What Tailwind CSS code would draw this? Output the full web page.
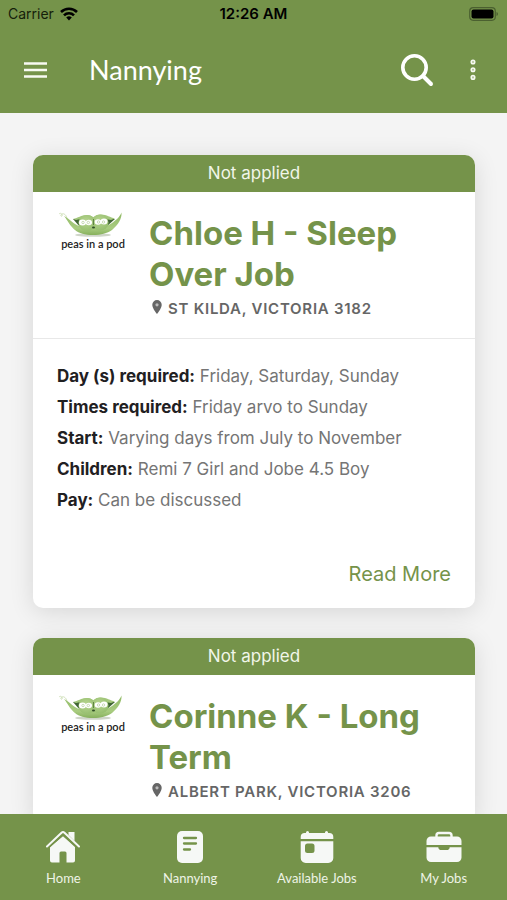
<!DOCTYPE html>
<html lang="en">
<head>
<meta charset="utf-8">
<meta name="viewport" content="width=device-width, initial-scale=1">
<title>Nannying</title>
<script src="https://cdn.jsdelivr.net/npm/@tailwindcss/browser@4"></script>
</head>
<body class="flex h-dvh flex-col overflow-hidden bg-[#f4f4f4] font-['Inter','Liberation_Sans',sans-serif]">
<svg class="absolute size-0" aria-hidden="true">
  <defs>
    <linearGradient id="pod" x1="0" y1="0" x2="0" y2="1">
      <stop offset="0" stop-color="#8fb964"/><stop offset=".7" stop-color="#a9cc80"/><stop offset="1" stop-color="#86b05c"/>
    </linearGradient>
    <radialGradient id="pea" cx=".45" cy=".4" r=".65">
      <stop offset="0" stop-color="#b9d692"/><stop offset="1" stop-color="#94bd6c"/>
    </radialGradient>
    <symbol id="peas" viewBox="0 0 68 28">
      <ellipse cx="36" cy="25" rx="18" ry="1.8" fill="#c3cabc" opacity=".8"/>
      <path d="M2 4c2-2 4 1 3 2s-2-1 0-2 4 1 5 4" fill="none" stroke="#d3e3bd" stroke-width="1"/>
      <path d="M16 9h42l-9 8H23z" fill="#3f6433"/>
      <path d="M7 6c5 3 7 5 11 8 5 3 9 4 18 4s15-2 19-5c4-3 7-5 9.500-10.500C65 9 61 15 55 20c-5 3.500-11 5-19 5s-14-1.500-18-5C13 16 11 11 7 6z" fill="url(#pod)"/>
      <path d="M16 9c5-1 8-4 14-4 3 0 5 1 6.500 2.500C38 5.500 41 4.500 44 4.500c6 0 9 3 14 4l-4 1.500-6-1H24l-5 1z" fill="#a3c77c"/>
      <ellipse cx="30" cy="13" rx="8.500" ry="8" fill="url(#pea)"/>
      <ellipse cx="43" cy="12.500" rx="8.500" ry="8" fill="url(#pea)"/>
      <g fill="#fff">
        <ellipse cx="25.500" cy="12.500" rx="3.600" ry="3"/><ellipse cx="31.800" cy="12.500" rx="3.200" ry="2.800"/>
        <ellipse cx="41" cy="12" rx="3.300" ry="2.800"/><ellipse cx="47" cy="11.500" rx="3.500" ry="3"/>
      </g>
      <g fill="none" stroke="#b5cd9c" stroke-width=".7"><circle cx="26" cy="12.500" r="1.200"/><circle cx="31.300" cy="12.500" r="1.200"/><circle cx="41.500" cy="12" r="1.200"/><circle cx="46.500" cy="12" r="1.200"/></g>
      <path d="M36.500 9v6" stroke="#5f8545" stroke-width="1"/>
      <ellipse cx="36.500" cy="17.500" rx="1.500" ry="1" fill="#2f4d26"/>
    </symbol>
    <symbol id="pin" viewBox="0 0 10 14">
      <path fill="#666" d="M5 0a4.700 4.700 0 0 0-4.700 4.700C.3 8 3.500 12 5 14c1.500-2 4.700-6 4.700-9.300A4.700 4.700 0 0 0 5 0z"/><circle cx="5" cy="4.800" r="1.600" fill="#bbb"/>
    </symbol>
  </defs>
</svg>

<header class="shrink-0 bg-[#75934a]">
  <div class="grid h-7 grid-cols-3 items-center px-2 text-sm text-black">
    <div class="flex items-center gap-1.5 text-[#15200a]">
      <span>Carrier</span>
      <svg class="h-[14px] w-[18px]" viewBox="0 0 18 14" fill="none" stroke="#000" stroke-width="2.600" aria-label="Wi-Fi">
        <path d="M1 5a11.500 11.500 0 0 1 16 0M4 8.300a7 7 0 0 1 10 0"/>
        <path d="M9 13.500 6.200 10.600a4 4 0 0 1 5.600 0z" fill="#000" stroke="none"/>
      </svg>
    </div>
    <span class="text-center text-[15px] font-semibold">12:26 AM</span>
    <svg class="h-[14px] w-[30px] justify-self-end" viewBox="0 0 30 14" aria-label="Battery full">
      <rect x=".7" y=".7" width="25.600" height="12.600" rx="3.500" fill="none" stroke="#4b6030" stroke-width="1.200"/>
      <rect x="2.500" y="2.500" width="22" height="9" rx="2" fill="#000"/>
      <path d="M27.500 5c2 .7 2 3.300 0 4z" fill="#4b6030"/>
    </svg>
  </div>
  <div class="flex h-[85px] items-center pr-[31px] pb-0.5 pl-6 text-white">
    <button type="button" aria-label="Menu" class="mr-[42px]">
      <svg class="h-4 w-[23px]" viewBox="0 0 23 16" stroke="#f7faf2" stroke-width="2.300"><path d="M0 1.500h23M0 8h23M0 14.500h23"/></svg>
    </button>
    <h1 class="grow font-['Lato',sans-serif] text-[27px] leading-8">Nannying</h1>
    <button type="button" aria-label="Search" class="mr-9">
      <svg class="size-[34px]" viewBox="0 0 34 34" fill="none" stroke="#fff" stroke-linecap="round"><circle cx="14.500" cy="14.500" r="11.700" stroke-width="3.600"/><path d="m23 23 8 8" stroke-width="4"/></svg>
    </button>
    <button type="button" aria-label="More options">
      <svg class="h-[22px] w-1.5" viewBox="0 0 6 22" fill="#b4c59b" stroke="#f7faf2" stroke-width="1.500"><circle cx="3" cy="3" r="1.800"/><circle cx="3" cy="10.700" r="1.800"/><circle cx="3" cy="18.400" r="1.800"/></svg>
    </button>
  </div>
</header>

<main class="flex min-h-0 grow flex-col gap-[30px] overflow-hidden pt-[42px] pr-8 pl-[33px]">
  <article class="shrink-0 overflow-hidden rounded-[10px] bg-white shadow-[0_4px_24px_rgba(0,0,0,0.12)]">
    <p class="bg-[#75934a] text-center text-[17px] leading-[37px] text-[#f1f6e9]">Not applied</p>
    <div class="flex gap-6 border-b border-[#e8e8e8] px-6 pt-[18px] pb-[15px]">
      <div class="flex w-[68px] shrink-0 flex-col items-center">
        <svg class="h-7 w-[68px]" role="img" aria-label="Pea pod"><use href="#peas"/></svg>
        <span class="pl-1 font-['Lato',sans-serif] text-[11px] leading-[12px] font-semibold whitespace-nowrap text-[#222]">peas in a pod</span>
      </div>
      <div>
        <h2 class="pt-[3px] text-[33px] leading-[41px] font-bold text-[#75934a]">Chloe H - Sleep Over Job</h2>
        <p class="flex items-center gap-1.5 pl-[3px] text-[15px] leading-7 font-semibold tracking-wider text-[#666]"><svg class="mb-1 h-[14px] w-2.5"><use href="#pin"/></svg>ST KILDA, VICTORIA 3182</p>
      </div>
    </div>
    <dl class="px-6 pt-[22px] text-[17px] leading-[31px] text-[#757575]">
      <div><dt class="inline font-bold text-[#1f2022]">Day (s) required:</dt> <dd class="inline">Friday, Saturday, Sunday</dd></div>
      <div><dt class="inline font-bold text-[#1f2022]">Times required:</dt> <dd class="inline">Friday arvo to Sunday</dd></div>
      <div><dt class="inline font-bold text-[#1f2022]">Start:</dt> <dd class="inline">Varying days from July to November</dd></div>
      <div><dt class="inline font-bold text-[#1f2022]">Children:</dt> <dd class="inline">Remi 7 Girl and Jobe 4.5 Boy</dd></div>
      <div><dt class="inline font-bold text-[#1f2022]">Pay:</dt> <dd class="inline">Can be discussed</dd></div>
    </dl>
    <div class="flex justify-end px-6 pt-[43px] pb-[19px]">
      <a href="#" class="text-[20px] leading-[30px] text-[#75934a]">Read More</a>
    </div>
  </article>

  <article class="shrink-0 overflow-hidden rounded-[10px] bg-white shadow-[0_4px_24px_rgba(0,0,0,0.12)]">
    <p class="bg-[#75934a] text-center text-[17px] leading-[37px] text-[#f1f6e9]">Not applied</p>
    <div class="flex gap-6 border-b border-[#e8e8e8] px-6 pt-[18px] pb-[15px]">
      <div class="flex w-[68px] shrink-0 flex-col items-center">
        <svg class="h-7 w-[68px]" role="img" aria-label="Pea pod"><use href="#peas"/></svg>
        <span class="pl-1 font-['Lato',sans-serif] text-[11px] leading-[12px] font-semibold whitespace-nowrap text-[#222]">peas in a pod</span>
      </div>
      <div>
        <h2 class="pt-[3px] text-[33px] leading-[41px] font-bold text-[#75934a]">Corinne K - Long Term</h2>
        <p class="flex items-center gap-1.5 pl-[3px] text-[15px] leading-7 font-semibold tracking-wider text-[#666]"><svg class="mb-1 h-[14px] w-2.5"><use href="#pin"/></svg>ALBERT PARK, VICTORIA 3206</p>
      </div>
    </div>
  </article>
</main>

<nav class="grid h-[86px] shrink-0 grid-cols-4 bg-[#75934a] pt-4 font-['Lato',sans-serif] text-[13px] leading-4 text-[#eef3e6]">
  <a href="#" class="flex flex-col items-center gap-1.5">
    <svg class="size-[34px]" viewBox="0 0 34 34" fill="#f6f8f6">
      <path d="M17 6.300 29 17v13.500a2 2 0 0 1-2 2h-6.500V23a1.500 1.500 0 0 0-1.500-1.500h-4a1.500 1.500 0 0 0-1.500 1.500v9.500H6a2 2 0 0 1-2-2V17z"/>
      <path d="M1 16.500 15.500 2.800a2 2 0 0 1 3 0L33 16.500" fill="none" stroke="#f6f8f6" stroke-width="2" stroke-linecap="round"/>
      <path d="M22.500 2h6v9l-6-6z"/>
      <path d="m3.500 17 12.500-11.500a1.500 1.500 0 0 1 2 0L30.500 17" fill="none" stroke="#75934a" stroke-width="1.300"/>
    </svg>Home</a>
  <a href="#" class="flex flex-col items-center gap-1.5">
    <svg class="size-[34px]" viewBox="0 0 34 34"><rect x="4" y="1" width="26" height="32" rx="5" fill="#f6f8f6"/><path d="M11 8h12M11 13.500h12M11 19.500h6" stroke="#75934a" stroke-width="2.300" stroke-linecap="round"/></svg>Nannying</a>
  <a href="#" class="flex flex-col items-center gap-1.5">
    <svg class="size-[34px]" viewBox="0 0 34 34" fill="#f6f8f6"><path d="M.7 9V7a4 4 0 0 1 4-4H6V2.500a1.500 1.500 0 0 1 3 0V3h16v-.5a1.500 1.500 0 0 1 3 0V3h1.300a4 4 0 0 1 4 4v2z"/><path fill-rule="evenodd" d="M.7 11.200h32.600V28a5 5 0 0 1-5 5H5.700a5 5 0 0 1-5-5zM7.500 13.500A2.500 2.500 0 0 0 5 16v4.500A2.500 2.500 0 0 0 7.500 23H12a2.500 2.500 0 0 0 2.500-2.500V16a2.500 2.500 0 0 0-2.500-2.500z"/></svg>Available Jobs</a>
  <a href="#" class="flex flex-col items-center gap-1.5">
    <svg class="h-[34px] w-9" viewBox="0 0 36 34" fill="#f6f8f6"><path d="M10.500 8V5.500a2.500 2.500 0 0 1 2.500-2.500h10a2.500 2.500 0 0 1 2.500 2.500V8" fill="none" stroke="#f6f8f6" stroke-width="2.400"/><path d="M.5 15v-4a4.500 4.500 0 0 1 4.500-4.500h26a4.500 4.500 0 0 1 4.500 4.500v4z"/><path d="M.5 17.200h11.800a3 3 0 0 0 3 2.800h5.400a3 3 0 0 0 3-2.800h11.800v10.300a4.500 4.500 0 0 1-4.500 4.500H5A4.500 4.500 0 0 1 .5 27.500z"/></svg>My Jobs</a>
</nav>
</body>
</html>
